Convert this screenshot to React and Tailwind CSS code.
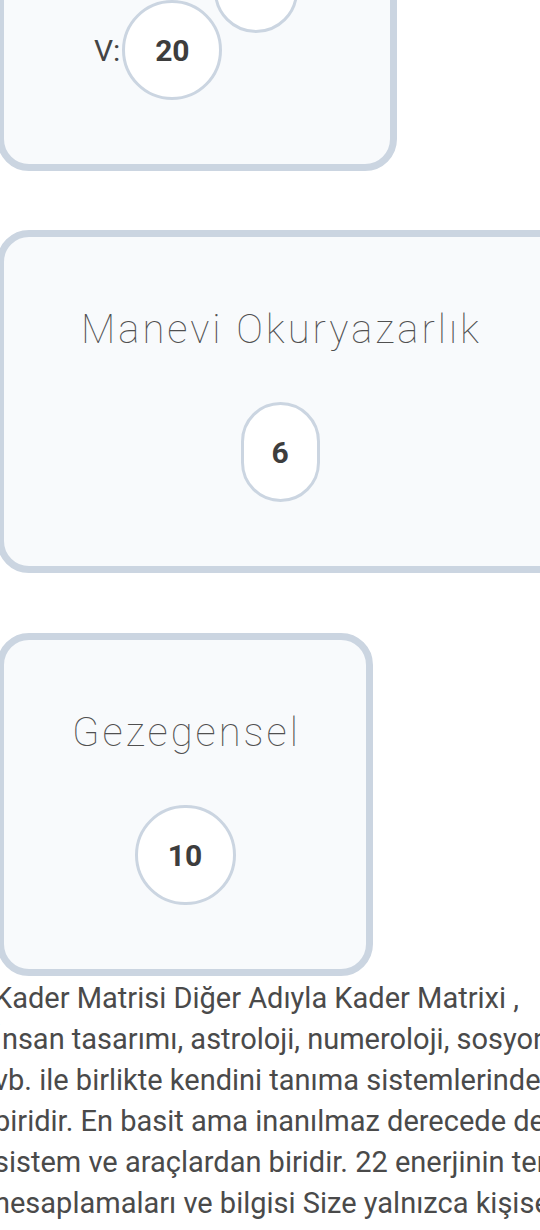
import React from 'react';

const font = { fontFamily: 'Roboto, "Liberation Sans", sans-serif' };

function Bubble({ value, className = '' }) {
  return (
    <div
      className={`flex items-center justify-center rounded-full border-[3px] border-[#cbd5e1] bg-white text-[30px] font-bold text-[#3d3d3d] ${className}`}
    >
      {value}
    </div>
  );
}

function EnergyCard({ title, value, width, bubble, extraRight = 0 }) {
  return (
    <div
      className="-ml-[3px] flex shrink-0 flex-col items-center rounded-[32px] border-[7px] border-[#cbd5e1] bg-[#f8fafc] pt-[69px] pb-[64px]"
      style={{ width, paddingRight: extraRight }}
    >
      <div className="pl-[3px] text-[40px] font-thin leading-[48px] tracking-[3px] text-[#505050] whitespace-nowrap">
        {title}
      </div>
      <Bubble value={value} className={`mt-[48px] ${bubble}`} />
    </div>
  );
}

const lines = [
  'Kader Matrisi Diğer Adıyla Kader Matrixi ,',
  'İnsan tasarımı, astroloji, numeroloji, sosyonik',
  'vb. ile birlikte kendini tanıma sistemlerinden',
  'biridir. En basit ama inanılmaz derecede derin',
  'sistem ve araçlardan biridir. 22 enerjinin temel',
  'hesaplamaları ve bilgisi Size yalnızca kişisel',
];

export default function App() {
  return (
    <div className="relative h-[1230px] w-[540px] overflow-hidden bg-white" style={font}>
      <div className="flex flex-col">
        {/* matrix card, top cut off by scroll */}
        <div className="relative -mt-[130px] -ml-[3px] h-[301px] w-[400px] shrink-0 rounded-[32px] border-[7px] border-[#cbd5e1] bg-[#f8fafc]">
          <Bubble value="" className="absolute left-[210px] top-[72px] h-[84px] w-[84px]" />
          <div className="absolute left-[90px] top-[123px] flex items-center">
            <span className="mr-[2px] text-[30px] text-[#444]">V:</span>
            <Bubble value="20" className="h-[100px] w-[100px]" />
          </div>
        </div>

        <div className="mt-[59px]">
          <EnergyCard
            title="Manevi Okuryazarlık"
            value="6"
            width={600}
            extraRight={34}
            bubble="h-[100px] w-[79px]"
          />
        </div>

        <div className="mt-[60px]">
          <EnergyCard title="Gezegensel" value="10" width={376} bubble="h-[100px] w-[101px]" />
        </div>

        <div className="-ml-[6px] mt-[2px] text-[29px] leading-[41px] text-[#4a4a4a]">
          {lines.map((l) => (
            <div key={l} className="whitespace-nowrap">
              {l}
            </div>
          ))}
        </div>
      </div>
    </div>
  );
}
